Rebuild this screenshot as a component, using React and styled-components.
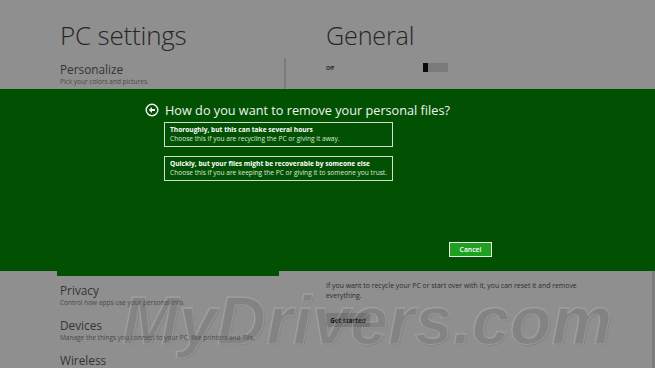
import styled, { createGlobalStyle } from "styled-components";

const GlobalStyle = createGlobalStyle`
  html, body {
    margin: 0;
    padding: 0;
    background: #8f8f8f;
  }
  body {
    font-family: "Open Sans", "Noto Sans", "Liberation Sans", sans-serif;
  }
`;

const Page = styled.div`
  position: relative;
  width: 655px;
  height: 368px;
  overflow: hidden;
  background: #8f8f8f;
  display: flex;
  flex-direction: column;
`;

const Top = styled.div`
  height: 89px;
  flex-shrink: 0;
  display: flex;
  padding-left: 60px;
  box-sizing: border-box;
`;

const LeftCol = styled.div`
  width: 224px;
  display: flex;
  flex-direction: column;
`;

const RightCol = styled.div`
  margin-left: 40px;
  display: flex;
  flex-direction: column;
`;

const Divider = styled.div`
  width: 2px;
  margin-top: 58px;
  background: #7b7b7b;
`;

const PageTitle = styled.h1`
  margin: 19px 0 0;
  font-size: ${(p) => p.$size || 26}px;
  line-height: 32px;
  font-weight: 300;
  color: #262626;
  letter-spacing: -0.2px;
`;

const NavItem = styled.div`
  display: flex;
  flex-direction: column;
  margin-top: ${(p) => p.$gap || 0}px;
`;

const NavTitle = styled.div`
  font-size: 11.8px;
  line-height: 16px;
  color: #333;
  font-weight: 400;
`;

const NavDesc = styled.div`
  font-size: 6.5px;
  line-height: 9px;
  color: #4a4a4a;
`;

const ToggleRow = styled.div`
  margin-top: 12px;
  display: flex;
  align-items: center;
  width: 122px;
  justify-content: space-between;
`;

const Label = styled.span`
  font-size: 5px;
  font-weight: 700;
  color: #222;
`;

const Toggle = styled.div`
  width: 25px;
  height: 9px;
  background: #7a7a7a;
  display: flex;
  &::before {
    content: "";
    width: 5px;
    height: 9px;
    background: #0a0a0a;
  }
`;

const Band = styled.div`
  height: 182px;
  flex-shrink: 0;
  background: #025102;
  display: flex;
  flex-direction: column;
  padding: 12px 0 0 145px;
  box-sizing: border-box;
  color: #ffffff;
`;

const DialogHead = styled.div`
  display: flex;
  align-items: center;
  gap: 6px;
`;

const DialogTitle = styled.h2`
  margin: 0;
  font-size: 12.7px;
  line-height: 18px;
  font-weight: 400;
  color: #eef5ee;
`;

const Options = styled.div`
  margin: 3px 0 0 19px;
  display: flex;
  flex-direction: column;
  gap: 9px;
`;

const Option = styled.div`
  width: 229px;
  height: 25px;
  box-sizing: border-box;
  border: 1.5px solid #cfe0cf;
  padding: 2px 5px 0;
  display: flex;
  flex-direction: column;
`;

const OptionTitle = styled.div`
  font-size: 6.6px;
  line-height: 9px;
  font-weight: 700;
  color: #fff;
  white-space: nowrap;
`;

const OptionDesc = styled.div`
  font-size: 6.6px;
  line-height: 9px;
  color: #dce8dc;
  white-space: nowrap;
`;

const Actions = styled.div`
  margin-top: 61px;
  padding-left: 304px;
  display: flex;
`;

const Cancel = styled.button`
  width: 43px;
  height: 15px;
  padding: 0;
  background: #20a020;
  border: 1.5px solid #e8f4e8;
  color: #fff;
  font-family: inherit;
  font-size: 6.8px;
  font-weight: 600;
`;

const Bottom = styled.div`
  flex: 1;
  min-height: 0;
  overflow: hidden;
  display: flex;
  padding-left: 60px;
  border-right: 3px solid #7c7c7c;
`;

const BottomLeft = styled.div`
  width: 224px;
  display: flex;
  flex-direction: column;
  &::before {
    content: "";
    display: block;
    margin-left: -3px;
    width: 222px;
    height: 5px;
    flex-shrink: 0;
    background: #025102;
  }
`;

const BottomRight = styled.div`
  margin-left: 42px;
  display: flex;
  flex-direction: column;
  padding-top: 10px;
`;

const Body = styled.p`
  margin: 0;
  width: 258px;
  font-size: 6.9px;
  line-height: 10px;
  color: #2c2c2c;
`;

const GetStarted = styled.button`
  margin-top: 12px;
  width: 44px;
  height: 14px;
  padding: 0;
  background: #7b7b7b;
  border: none;
  font-family: inherit;
  font-size: 6.3px;
  font-weight: 700;
  color: #151515;
`;

const Watermark = styled.div`
  position: absolute;
  left: 122px;
  top: 280px;
  font-family: "Liberation Sans", Arial, sans-serif;
  font-size: 68px;
  font-weight: 700;
  font-style: italic;
  line-height: 80px;
  letter-spacing: 0.2px;
  color: rgba(255, 255, 255, 0.025);
  -webkit-text-stroke: 1px rgba(225, 225, 225, 0.24);
  text-shadow: 1px 1px 1px rgba(70, 70, 70, 0.2);
  pointer-events: none;
  white-space: nowrap;
`;

const BackIcon = () => (
  <svg width="14" height="14" viewBox="0 0 14 14">
    <circle cx="7" cy="7" r="5.8" fill="none" stroke="#f2f7f2" strokeWidth="1.4" />
    <path d="M3.8 7 L7 4 V6 H10 V8 H7 V10 Z" fill="#f2f7f2" />
  </svg>
);

export default function App() {
  return (
    <Page>
      <GlobalStyle />
      <Top>
        <LeftCol>
          <PageTitle>PC settings</PageTitle>
          <NavItem $gap={10}>
            <NavTitle>Personalize</NavTitle>
            <NavDesc>Pick your colors and pictures.</NavDesc>
          </NavItem>
        </LeftCol>
        <Divider />
        <RightCol>
          <PageTitle $size={25.2}>General</PageTitle>
          <ToggleRow>
            <Label>Off</Label>
            <Toggle />
          </ToggleRow>
        </RightCol>
      </Top>
      <Band>
        <DialogHead>
          <BackIcon />
          <DialogTitle>How do you want to remove your personal files?</DialogTitle>
        </DialogHead>
        <Options>
          <Option>
            <OptionTitle>Thoroughly, but this can take several hours</OptionTitle>
            <OptionDesc>Choose this if you are recycling the PC or giving it away.</OptionDesc>
          </Option>
          <Option>
            <OptionTitle>Quickly, but your files might be recoverable by someone else</OptionTitle>
            <OptionDesc>Choose this if you are keeping the PC or giving it to someone you trust.</OptionDesc>
          </Option>
        </Options>
        <Actions>
          <Cancel>Cancel</Cancel>
        </Actions>
      </Band>
      <Bottom>
        <BottomLeft>
          <NavItem $gap={6}>
            <NavTitle>Privacy</NavTitle>
            <NavDesc>Control how apps use your personal info.</NavDesc>
          </NavItem>
          <NavItem $gap={10}>
            <NavTitle>Devices</NavTitle>
            <NavDesc>Manage the things you connect to your PC, like printers and TVs.</NavDesc>
          </NavItem>
          <NavItem $gap={10}>
            <NavTitle>Wireless</NavTitle>
          </NavItem>
        </BottomLeft>
        <BottomRight>
          <Body>
            If you want to recycle your PC or start over with it, you can reset it and remove
            everything.
          </Body>
          <GetStarted>Get started</GetStarted>
        </BottomRight>
      </Bottom>
      <Watermark>MyDrivers.com</Watermark>
    </Page>
  );
}
